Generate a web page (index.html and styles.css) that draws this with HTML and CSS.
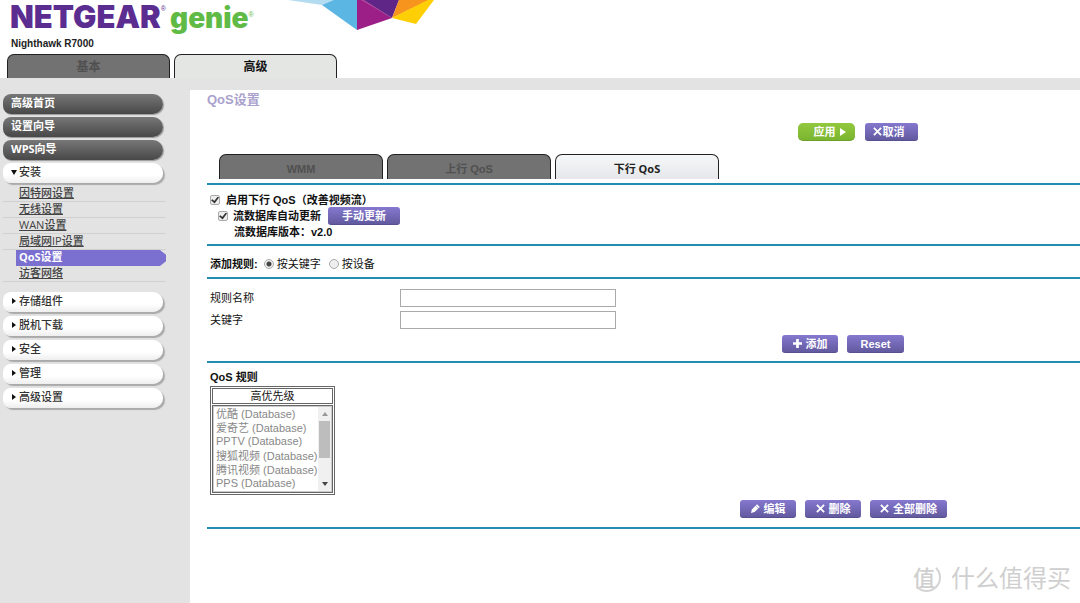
FILE: index.html
```html
<!DOCTYPE html>
<html lang="zh-CN">
<head>
<meta charset="utf-8">
<title>NETGEAR genie</title>
<link rel="stylesheet" href="styles.css">
</head>
<body>
<header class="header">
  <svg class="facets" viewBox="0 0 155 32" aria-hidden="true">
    <path fill="#b3dcf0" d="M8 0H58L42 5Z"/>
    <path fill="#5cb6e4" d="M42 5L54 0H77V30Z"/>
    <path fill="#9b1f87" d="M77 0H83L112 18L77 30Z"/>
    <path fill="#5f2688" d="M83 0H119L112 18Z"/>
    <path fill="#b04a9c" d="M81 0H84L112 18Z"/>
    <path fill="#f7941e" d="M119 0H149L112 18Z"/>
    <path fill="#ffcf05" d="M154 0H148L112 18L136 24Z"/>
  </svg>
  <div class="brand"><span class="netgear">NETGEAR</span><sup class="reg">®</sup><span class="genie">genie</span><sup class="reg reg-green">®</sup></div>
  <div class="model">Nighthawk R7000</div>
  <nav class="tabs">
    <button class="tab tab-off">基本</button>
    <button class="tab tab-on">高级</button>
  </nav>
</header>
<div class="layout">
  <nav class="sidebar">
    <a class="pill pill-dark" href="#">高级首页</a>
    <a class="pill pill-dark" href="#">设置向导</a>
    <a class="pill pill-dark" href="#">WPS向导</a>
    <button class="pill pill-light"><svg class="caret" viewBox="0 0 6 6"><path d="M0 1H6L3 6Z"/></svg>安装</button>
    <ul class="submenu">
      <li><a href="#">因特网设置</a></li>
      <li><a href="#">无线设置</a></li>
      <li><a href="#">WAN设置</a></li>
      <li><a href="#">局域网IP设置</a></li>
      <li class="current"><a href="#">QoS设置</a></li>
      <li><a href="#">访客网络</a></li>
    </ul>
    <div class="groups">
      <button class="pill pill-light"><svg class="caret" viewBox="0 0 6 6"><path d="M1 0L5 3L1 6Z"/></svg>存储组件</button>
      <button class="pill pill-light"><svg class="caret" viewBox="0 0 6 6"><path d="M1 0L5 3L1 6Z"/></svg>脱机下载</button>
      <button class="pill pill-light"><svg class="caret" viewBox="0 0 6 6"><path d="M1 0L5 3L1 6Z"/></svg>安全</button>
      <button class="pill pill-light"><svg class="caret" viewBox="0 0 6 6"><path d="M1 0L5 3L1 6Z"/></svg>管理</button>
      <button class="pill pill-light"><svg class="caret" viewBox="0 0 6 6"><path d="M1 0L5 3L1 6Z"/></svg>高级设置</button>
    </div>
  </nav>
  <main class="content">
    <h1 class="title">QoS设置</h1>
    <div class="actions actions-top">
      <button class="btn btn-apply">应用<svg class="icon-play" viewBox="0 0 6 8"><path d="M0 0L6 4L0 8Z" fill="#fff"/></svg></button>
      <button class="btn btn-cancel"><svg class="icon" viewBox="0 0 10 10"><path d="M1 1L9 9M9 1L1 9"/></svg>取消</button>
    </div>
    <div class="subtabs">
      <button class="tab tab-off">WMM</button>
      <button class="tab tab-off">上行 QoS</button>
      <button class="tab tab-sub-on">下行 QoS</button>
    </div>
    <section class="block block-enable">
      <div class="line"><input type="checkbox" id="enable" checked><label for="enable">启用下行 QoS（改善视频流）</label></div>
      <div class="line line-in"><input type="checkbox" id="auto" checked><label for="auto">流数据库自动更新</label><button class="btn btn-update">手动更新</button></div>
      <div class="line line-version">流数据库版本：v2.0</div>
    </section>
    <section class="block block-type">
      <strong class="type-label">添加规则:</strong>
      <input type="radio" name="type" id="bykey" checked><label for="bykey">按关键字</label>
      <input type="radio" name="type" id="bydev"><label for="bydev">按设备</label>
    </section>
    <section class="block block-form">
      <div class="field"><label for="name">规则名称</label><input type="text" id="name"></div>
      <div class="field"><label for="key">关键字</label><input type="text" id="key"></div>
      <div class="actions actions-add">
        <button class="btn btn-add"><svg class="icon icon-bold" viewBox="0 0 10 10"><path d="M5 0V10M0 5H10"/></svg>添加</button>
        <button class="btn btn-reset">Reset</button>
      </div>
    </section>
    <section class="block block-rules">
      <h2 class="rules-title"><label for="rules">QoS 规则</label></h2>
      <table class="rules">
        <tr><th>高优先级</th></tr>
        <tr><td>
          <div class="list">
            <select id="rules" size="6" disabled>
              <option>优酷 (Database)</option>
              <option>爱奇艺 (Database)</option>
              <option>PPTV (Database)</option>
              <option>搜狐视频 (Database)</option>
              <option>腾讯视频 (Database)</option>
              <option>PPS (Database)</option>
            </select>
            <div class="scroll">
              <svg viewBox="0 0 6 4"><path d="M0 4L3 0L6 4Z" fill="#999"/></svg>
              <span class="thumb"></span>
              <svg viewBox="0 0 6 4"><path d="M0 0L3 4L6 0Z" fill="#444"/></svg>
            </div>
          </div>
        </td></tr>
      </table>
      <div class="actions actions-edit">
        <button class="btn btn-edit"><svg class="icon" viewBox="0 0 10 10"><path d="M0 10L1 6L5 2L8 5L4 9Z" fill="#fff" stroke="none"/><path d="M6 1L9 4"/></svg>编辑</button>
        <button class="btn btn-edit"><svg class="icon" viewBox="0 0 10 10"><path d="M1 1L9 9M9 1L1 9"/></svg>删除</button>
        <button class="btn btn-all"><svg class="icon" viewBox="0 0 10 10"><path d="M1 1L9 9M9 1L1 9"/></svg>全部删除</button>
      </div>
    </section>
    <div class="block"></div>
  </main>
</div>
<div class="watermark"><span class="seal">值</span><span>什么值得买</span></div>
</body>
</html>
```
FILE: styles.css
```css
* { box-sizing: border-box; }
body {
  margin: 0;
  min-height: 100vh;
  display: flex;
  flex-direction: column;
  background: #fff;
  color: #111;
  font: 11px/16px "Liberation Sans", "Noto Sans CJK SC", sans-serif;
}
button, input, select { font: inherit; color: inherit; margin: 0; }
button { padding: 0; border: 0; cursor: pointer; }

.header { position: relative; padding: 0 7px; }
.facets { position: absolute; left: 280px; top: 0; width: 155px; height: 32px; }
.brand {
  display: flex;
  height: 36px;
  padding: 1px 0 0 3px;
}
.netgear { color: #5c2d91; font: 900 31px/32px Inter, sans-serif; }
.genie { color: #5fbb46; font: 900 28px/34px Inter, sans-serif; margin-left: 4px; }
.reg { font: 7px/16px "Liberation Sans", sans-serif; color: #5c2d91; }
.reg-green { color: #5fbb46; line-height: 28px; }
.model { padding-left: 4px; font-size: 10px; font-weight: bold; line-height: 16px; color: #222; }
.tabs { display: flex; gap: 4px; margin-top: 2px; }
.tab {
  width: 163px;
  height: 24px;
  border: 1px solid #222;
  border-bottom: 0;
  border-radius: 7px 7px 0 0;
  font-size: 12px;
  font-weight: bold;
}
.tab-off { background: #727272; color: #505050; }
.tab-on { background: #e4e6e3; color: #111; }
.tab-sub-on { background: linear-gradient(#f6f7f8, #e5e7ea); color: #222; font-family: "Open Sans", "Noto Sans CJK SC", sans-serif; }

.layout { flex: 1; display: flex; background: #e3e3e3; }
.sidebar {
  flex: none;
  width: 190px;
  padding: 16px 24px 0 3px;
  font-family: "Open Sans", "Noto Sans CJK SC", sans-serif;
}
.pill {
  display: flex;
  align-items: center;
  width: 160px;
  height: 20px;
  margin-bottom: 3px;
  padding: 0 0 2px 8px;
  border-radius: 8px 10px 10px 8px;
  text-decoration: none;
  box-shadow: 1px 1px 1px #999;
}
.pill-dark { color: #fff; font-weight: bold; background: linear-gradient(#777, #484848); }
.pill-light { color: #333; font-weight: 500; background: linear-gradient(#fff 60%, #eee); box-shadow: 2px 2px 1px #aaa; }
.caret { width: 6px; height: 6px; margin-right: 2px; fill: #111; }
.submenu { list-style: none; margin: 0 0 10px; padding: 0; width: 163px; }
.submenu li { height: 16px; padding-left: 16px; border-bottom: 1px solid #d0d0d0; line-height: 14px; }
.submenu a { color: #444; font-weight: 500; }
.submenu .current {
  margin-left: 13px;
  padding-left: 3px;
  border: 0;
  background: #7b6fd0;
  clip-path: polygon(0 0, 96% 0, 100% 30%, 100% 70%, 96% 100%, 0 100%);
}
.submenu .current a { color: #fff; font-weight: bold; text-decoration: none; }
.groups .pill { margin-bottom: 4px; }

.content { flex: 1; min-width: 0; margin-top: 12px; padding-left: 17px; background: #fff; }
.title { margin: 0; height: 33px; font-size: 13px; line-height: 20px; color: #aaa2cc; }
.actions { display: flex; }
.btn {
  display: inline-flex;
  align-items: center;
  justify-content: center;
  gap: 4px;
  height: 18px;
  border-radius: 3px;
  border-bottom: 1px solid #57508f;
  background: linear-gradient(#8578cf, #625a9f);
  color: #fff;
  font-weight: bold;
}
.icon { width: 9px; height: 9px; fill: none; stroke: #fff; stroke-width: 2; }
.icon-bold { stroke-width: 3; }
.icon-play { width: 6px; height: 8px; }
.actions-top { padding-left: 591px; gap: 10px; }
.btn-apply { width: 57px; padding-left: 6px; border-radius: 5px; border-color: #6ba02b; background: linear-gradient(#92c83e, #7bb52f); }
.btn-cancel { width: 53px; padding-right: 6px; gap: 1px; }
.subtabs { display: flex; gap: 4px; padding: 13px 0 4px 12px; }
.subtabs .tab { height: 25px; width: 164px; padding-top: 4px; font-size: 11px; }

.block { border-top: 2px solid #208eb0; }
.block-enable { height: 61px; padding: 7px 0 0 3px; font-weight: bold; }
.line { display: flex; align-items: center; height: 16px; }
input[type="checkbox"], input[type="radio"] {
  appearance: none;
  width: 10px;
  height: 10px;
  border: 1px solid #aaa;
  background: #eee;
}
input[type="checkbox"] { display: grid; place-items: center; border-radius: 2px; margin-right: 6px; }
input[type="checkbox"]:checked::before {
  content: "";
  width: 8px;
  height: 7px;
  background: #333;
  clip-path: polygon(0 55%, 20% 40%, 40% 65%, 85% 0, 100% 15%, 45% 100%);
}
.line-in { padding-left: 8px; }
.line-in input { margin-right: 5px; }
.line-version { padding-left: 24px; }
.btn-update { width: 72px; margin-left: 7px; }
.block-type { display: flex; align-items: center; height: 33px; padding: 5px 0 0 3px; }
.type-label { margin-right: 6px; }
input[type="radio"] { border-radius: 50%; margin-right: 3px; }
input[type="radio"]:checked { background: radial-gradient(#444 0 2px, #eee 3px); }
.block-type label { margin-right: 8px; }
.block-form { height: 84px; padding: 8px 0 0 3px; }
.field { display: flex; align-items: center; height: 22px; }
.field label { width: 190px; }
.field input { width: 216px; height: 18px; border: 1px solid #aaa; background: #fff; padding: 0 3px; }
.actions-add { padding: 4px 0 0 572px; gap: 9px; }
.btn-add { width: 56px; }
.btn-reset { width: 57px; }
.block-rules { height: 166px; padding: 6px 0 0 3px; }
.rules-title { margin: 0; font-size: 11px; line-height: 16px; }
.rules { margin-top: 1px; width: 125px; border: 1px solid #666; border-collapse: separate; border-spacing: 1px; }
.rules th, .rules td { border: 1px solid #666; padding: 0; }
.rules th { height: 16px; line-height: 14px; font-weight: normal; }
.list { display: flex; height: 86px; border: 1px solid #ccc; }
.list select {
  flex: 1;
  min-width: 0;
  height: 84px;
  padding: 0;
  border: 0;
  outline: 0;
  background: #fff;
  color: #888;
  opacity: 1;
  overflow: hidden;
  scrollbar-width: none;
}
.list option { display: flex; align-items: center; min-height: 14px; height: 14px; padding: 0 0 2px 2px; color: #888; }
.scroll { width: 13px; display: flex; flex-direction: column; align-items: center; padding: 5px 0; background: #f0f0f0; }
.scroll svg { width: 6px; height: 4px; }
.thumb { width: 11px; height: 37px; margin: 5px 0 auto; background: #bdbdbd; }
.actions-edit { padding: 5px 0 0 530px; gap: 9px; }
.btn-edit { width: 56px; }
.btn-all { width: 77px; }

.watermark {
  position: absolute;
  right: 9px;
  bottom: 10px;
  display: flex;
  align-items: center;
  gap: 10px;
  color: #cfcfcf;
  font: 24px/32px "Noto Sans CJK SC", sans-serif;
}
.seal { width: 29px; height: 29px; border: 2px solid #d4d4d4; border-left-color: transparent; border-top-color: transparent; border-radius: 50%; font-size: 22px; font-weight: 500; line-height: 23px; text-indent: -1px; }
```
